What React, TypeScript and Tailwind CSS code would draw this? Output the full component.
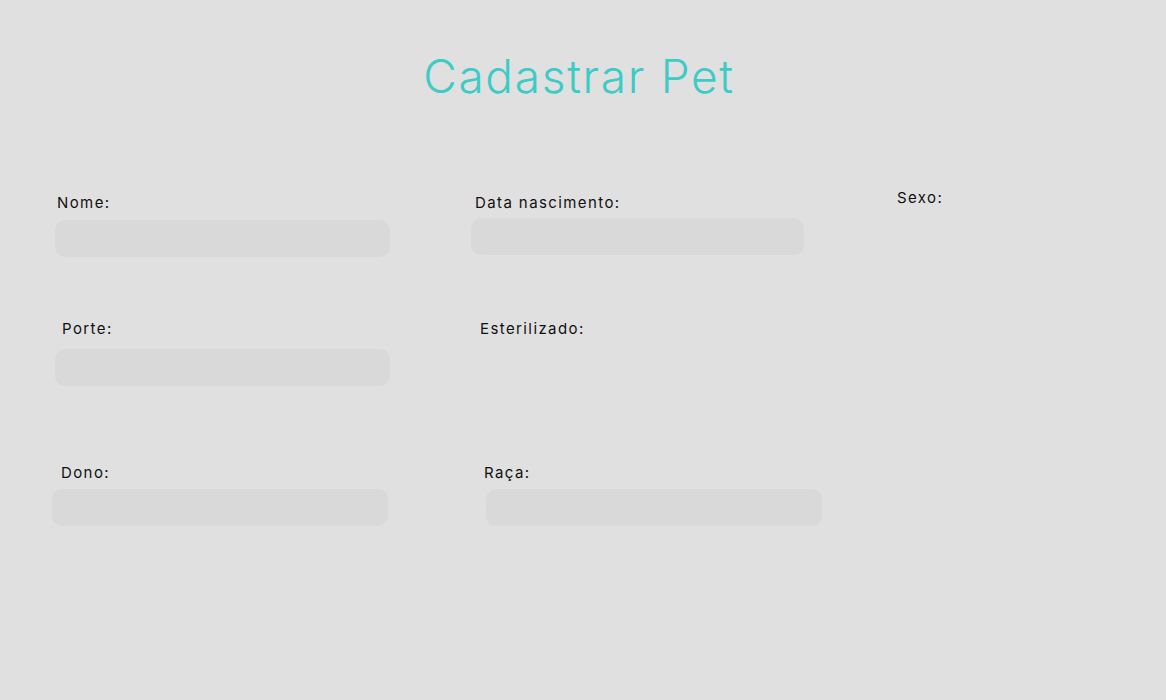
import React from "react";

const labelCls = "text-[15px] leading-[22px] text-[#111] tracking-[1.4px]";

function Field({ label, className = "", labelClass = "" }: { label: string; className?: string; labelClass?: string }) {
  return (
    <div className={`flex flex-col ${className}`}>
      <label className={`${labelCls} ${labelClass}`}>{label}</label>
      <input className="h-[37px] rounded-[10px] bg-[#d9d9d9] outline-none" />
    </div>
  );
}

export default function App() {
  return (
    <div className="h-[700px] w-full bg-[#e0e0e0] font-['Inter',sans-serif]">
      <h1 className="pt-[45px] pr-[8px] text-center text-[46px] leading-[62px] font-light tracking-[1.7px] text-[#3ccbc5]">
        Cadastrar Pet
      </h1>

      {/* linha 1 */}
      <div className="mt-[85px] flex items-start pl-[55px]">
        <Field label="Nome:" className="w-[335px]" labelClass="pl-[2px] mb-[6px]" />
        <Field label="Data nascimento:" className="ml-[81px] w-[333px]" labelClass="pl-[4px] mb-[4px]" />
        <div className={`ml-[93px] -mt-[5px] ${labelCls}`}>Sexo:</div>
      </div>

      {/* linha 2 */}
      <div className="mt-[61px] flex items-start pl-[55px]">
        <Field label="Porte:" className="w-[335px]" labelClass="pl-[7px] mb-[9px]" />
        <div className={`ml-[90px] ${labelCls}`}>Esterilizado:</div>
      </div>

      {/* linha 3 */}
      <div className="mt-[76px] flex items-start pl-[52px]">
        <Field label="Dono:" className="w-[336px]" labelClass="pl-[9px] mb-[5px]" />
        <Field label="Raça:" className="ml-[98px] w-[336px]" labelClass="-ml-[2px] mb-[5px]" />
      </div>
    </div>
  );
}
